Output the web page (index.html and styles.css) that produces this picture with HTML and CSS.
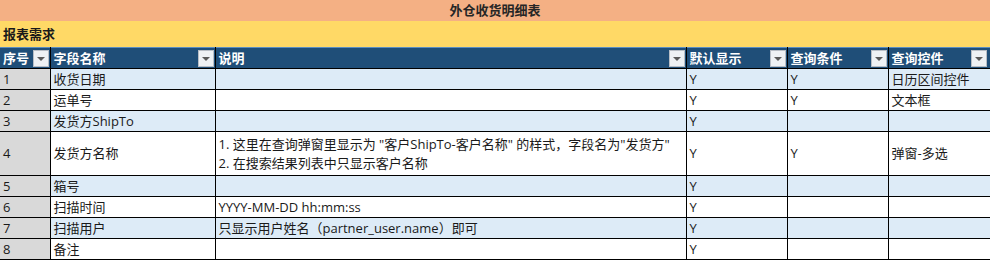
FILE: index.html
```html
<!DOCTYPE html>
<html lang="zh-CN">
<head>
<meta charset="utf-8">
<title>外仓收货明细表</title>
<link rel="stylesheet" href="styles.css">
</head>
<body>
<div class="sheet">
  <div class="title">外仓收货明细表</div>
  <div class="section">报表需求</div>
  <table class="grid">
    <colgroup>
      <col class="c-no"><col class="c-name"><col class="c-desc"><col class="c-show"><col class="c-query"><col class="c-ctrl">
    </colgroup>
    <thead>
      <tr>
        <th><div class="hcell"><span>序号</span><span class="dd"></span></div></th>
        <th><div class="hcell"><span>字段名称</span><span class="dd"></span></div></th>
        <th><div class="hcell"><span>说明</span><span class="dd"></span></div></th>
        <th><div class="hcell"><span>默认显示</span><span class="dd"></span></div></th>
        <th><div class="hcell"><span>查询条件</span><span class="dd"></span></div></th>
        <th><div class="hcell last"><span>查询控件</span><span class="dd"></span></div></th>
      </tr>
    </thead>
    <tbody>
      <tr class="odd"><td class="no">1</td><td>收货日期</td><td></td><td>Y</td><td>Y</td><td>日历区间控件</td></tr>
      <tr><td class="no">2</td><td>运单号</td><td></td><td>Y</td><td>Y</td><td>文本框</td></tr>
      <tr class="odd"><td class="no">3</td><td>发货方ShipTo</td><td></td><td>Y</td><td></td><td></td></tr>
      <tr class="tall"><td class="no">4</td><td>发货方名称</td><td class="multi">1. 这里在查询弹窗里显示为 "客户ShipTo-客户名称" 的样式，字段名为"发货方"<br>2. 在搜索结果列表中只显示客户名称</td><td>Y</td><td>Y</td><td>弹窗-多选</td></tr>
      <tr class="odd"><td class="no">5</td><td>箱号</td><td></td><td>Y</td><td></td><td></td></tr>
      <tr><td class="no">6</td><td>扫描时间</td><td>YYYY-MM-DD hh:mm:ss</td><td>Y</td><td></td><td></td></tr>
      <tr class="odd"><td class="no">7</td><td>扫描用户</td><td>只显示用户姓名（partner_user.name）即可</td><td>Y</td><td></td><td></td></tr>
      <tr><td class="no">8</td><td>备注</td><td></td><td>Y</td><td></td><td></td></tr>
    </tbody>
  </table>
</div>
</body>
</html>
```
FILE: styles.css
```css
html, body {
  margin: 0;
  padding: 0;
  background: #ffffff;
}
body {
  font-family: "Open Sans", "Noto Sans CJK SC", sans-serif;
  font-size: 13px;
  color: #1a1a1a;
  overflow: hidden;
}
.sheet {
  width: 1000px;
}
.title {
  height: 21px;
  line-height: 21px;
  background: #f4b084;
  text-align: center;
  font-weight: bold;
  color: #262626;
  padding-right: 10px;
}
.section {
  height: 26px;
  line-height: 26px;
  background: #ffd966;
  font-weight: bold;
  padding-left: 3px;
  color: #1a1a1a;
}
.grid {
  border-collapse: collapse;
  table-layout: fixed;
  width: 1002px;
}
.c-no { width: 50px; }
.c-name { width: 165px; }
.c-desc { width: 471px; }
.c-show { width: 101px; }
.c-query { width: 101px; }
.c-ctrl { width: 114px; }
.grid th {
  background: #1f4e78;
  color: #ffffff;
  font-weight: bold;
  text-align: left;
  padding: 0;
  height: 20px;
  border-top: 1px solid #5b8ec0;
  border-left: 1px solid #000;
  border-right: 1px solid #000;
  border-bottom: 1px solid #000;
}
.grid th:first-child { border-left: none; }
.hcell {
  display: flex;
  justify-content: space-between;
  align-items: flex-end;
  height: 20px;
  padding-left: 3px;
  padding-right: 1px;
}
.hcell.last {
  justify-content: flex-start;
  gap: 0;
}
.hcell.last .dd {
  margin-left: 27px;
}
.hcell span:first-child {
  align-self: center;
  line-height: 20px;
}
.dd {
  box-sizing: border-box;
  width: 16px;
  height: 17px;
  background: #eef1f4;
  border: 1px solid #b8bec6;
  margin-bottom: 1px;
  display: flex;
  align-items: center;
  justify-content: center;
}
.dd::after {
  content: "";
  width: 0;
  height: 0;
  border-left: 4px solid transparent;
  border-right: 4px solid transparent;
  border-top: 4px solid #5a5a5a;
}
.grid td {
  border: 1px solid #000;
  height: 20px;
  padding: 0 3px;
  line-height: 19px;
  vertical-align: middle;
  white-space: nowrap;
  overflow: hidden;
  background: #ffffff;
}
.grid td:first-child { border-left: none; }
.grid tr.odd td { background: #ddebf7; }
.grid td.no, .grid tr.odd td.no { background: #d9d9d9; }
.grid tr.tall td { height: 43px; }
.grid td.multi { white-space: nowrap; }
```
